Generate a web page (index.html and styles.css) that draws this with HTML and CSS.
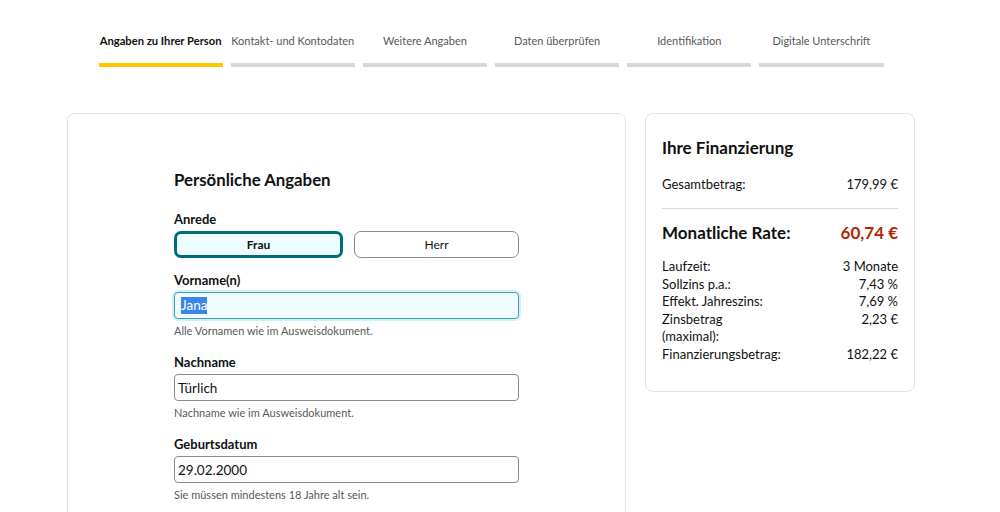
FILE: index.html
```html
<!DOCTYPE html>
<html lang="de">
<head>
<meta charset="utf-8">
<title>Angaben zu Ihrer Person</title>
<link rel="stylesheet" href="styles.css">
</head>
<body>
<div class="page">
  <nav class="steps">
    <div class="step active"><span class="step-label">Angaben zu Ihrer Person</span><span class="step-bar"></span></div>
    <div class="step"><span class="step-label">Kontakt- und Kontodaten</span><span class="step-bar"></span></div>
    <div class="step"><span class="step-label">Weitere Angaben</span><span class="step-bar"></span></div>
    <div class="step"><span class="step-label">Daten überprüfen</span><span class="step-bar"></span></div>
    <div class="step"><span class="step-label">Identifikation</span><span class="step-bar"></span></div>
    <div class="step"><span class="step-label">Digitale Unterschrift</span><span class="step-bar"></span></div>
  </nav>

  <div class="columns">
    <section class="card form-card">
      <div class="form">
        <h1 class="form-title">Persönliche Angaben</h1>

        <div class="field">
          <div class="label">Anrede</div>
          <div class="toggle-row">
            <div class="toggle selected">Frau</div>
            <div class="toggle">Herr</div>
          </div>
        </div>

        <div class="field">
          <div class="label">Vorname(n)</div>
          <div class="input focused"><span class="sel">Jana</span></div>
          <div class="hint">Alle Vornamen wie im Ausweisdokument.</div>
        </div>

        <div class="field">
          <div class="label">Nachname</div>
          <div class="input">Türlich</div>
          <div class="hint">Nachname wie im Ausweisdokument.</div>
        </div>

        <div class="field">
          <div class="label">Geburtsdatum</div>
          <div class="input">29.02.2000</div>
          <div class="hint">Sie müssen mindestens 18 Jahre alt sein.</div>
        </div>
      </div>
    </section>

    <aside class="card summary">
      <h2 class="summary-title">Ihre Finanzierung</h2>
      <div class="row total"><span>Gesamtbetrag:</span><span>179,99 €</span></div>
      <hr class="divider">
      <div class="row rate"><span>Monatliche Rate:</span><span class="rate-value">60,74 €</span></div>
      <div class="details">
        <div class="drow"><span class="dl">Laufzeit:</span><span class="dv">3 Monate</span></div>
        <div class="drow"><span class="dl">Sollzins p.a.:</span><span class="dv">7,43 %</span></div>
        <div class="drow"><span class="dl">Effekt. Jahreszins:</span><span class="dv">7,69 %</span></div>
        <div class="drow"><span class="dl">Zinsbetrag (maximal):</span><span class="dv">2,23 €</span></div>
        <div class="drow"><span class="dl">Finanzierungsbetrag:</span><span class="dv">182,22 €</span></div>
      </div>
    </aside>
  </div>
</div>
</body>
</html>
```

FILE: styles.css
```css
* { box-sizing: border-box; }

html, body {
  margin: 0;
  padding: 0;
  background: #ffffff;
}

body {
  font-family: Lato, "Noto Sans", Arial, sans-serif;
  color: #0f1111;
  overflow: hidden;
}

.page {
  width: 848px;
  margin-left: 67px;
}

/* Steps */
.steps {
  display: flex;
  gap: 8px;
  width: 785px;
  margin: 0 auto;
  padding-top: 32px;
}

.step {
  flex: 1 1 0;
  min-width: 0;
  display: flex;
  flex-direction: column;
  align-items: center;
}

.step-label {
  font-size: 11px;
  line-height: 18px;
  color: #565959;
  white-space: nowrap;
}

.step.active .step-label {
  color: #0f1111;
  font-weight: 700;
  font-size: 11.2px;
}

.step-bar {
  display: block;
  width: 100%;
  height: 4px;
  margin-top: 13px;
  background: #d8d8d8;
}

.step.active .step-bar {
  background: #ffc400;
}

/* Columns */
.columns {
  display: flex;
  gap: 19px;
  align-items: flex-start;
  margin-top: 46px;
}

.card {
  border: 1px solid #e3e3e3;
  border-radius: 8px;
  background: #fff;
}

.form-card {
  width: 559px;
  height: 440px;
  padding-top: 54px;
}

.form {
  width: 345px;
  margin: 0 auto;
}

.form-title {
  margin: 0 0 17px 0;
  font-size: 16.8px;
  line-height: 24px;
  font-weight: 700;
}

.field {
  margin-bottom: 14px;
}

.label {
  font-size: 13px;
  line-height: 19px;
  font-weight: 700;
  padding-top: 1px;
  margin-bottom: 2px;
}

.toggle-row {
  display: flex;
  gap: 11px;
  margin-bottom: -2px;
}

.toggle {
  flex: 1 1 0;
  height: 27px;
  border: 1px solid #888c8c;
  border-radius: 7px;
  display: flex;
  align-items: center;
  justify-content: center;
  font-size: 12px;
  color: #0f1111;
}

.toggle.selected {
  border: 3px solid #006b7a;
  background: #edfdff;
  font-weight: 700;
}

.input {
  height: 27px;
  border: 1px solid #888c8c;
  border-radius: 4px;
  padding: 0 3px;
  display: flex;
  align-items: center;
  font-size: 13.5px;
  color: #0f1111;
}

.input.focused {
  border-color: #4d9aa6;
  background: #f0fbfd;
  box-shadow: 0 0 0 2px #c8f3fa;
  padding-left: 6px;
}

.sel {
  background: #3a86e8;
  color: #ffffff;
  line-height: 17px;
}

.hint {
  margin-top: 4px;
  font-size: 11px;
  line-height: 15px;
  color: #565959;
}

/* Summary */
.summary {
  width: 270px;
  padding: 22px 16px 27px 16px;
}

.summary-title {
  margin: 0 0 15px 0;
  font-size: 17px;
  line-height: 24px;
  font-weight: 700;
}

.row {
  display: flex;
  justify-content: space-between;
}

.total {
  font-size: 13px;
  line-height: 18px;
}

.divider {
  border: 0;
  border-top: 1px solid #d5d9d9;
  margin: 15px 0 12px 0;
}

.rate {
  font-size: 17px;
  line-height: 24px;
  font-weight: 700;
  margin-bottom: 13px;
}

.rate-value {
  color: #b12704;
}

.details {
  font-size: 13px;
  line-height: 17.6px;
}

.drow {
  display: flex;
}

.dl {
  width: 50%;
}

.dv {
  width: 50%;
  text-align: right;
}
```
